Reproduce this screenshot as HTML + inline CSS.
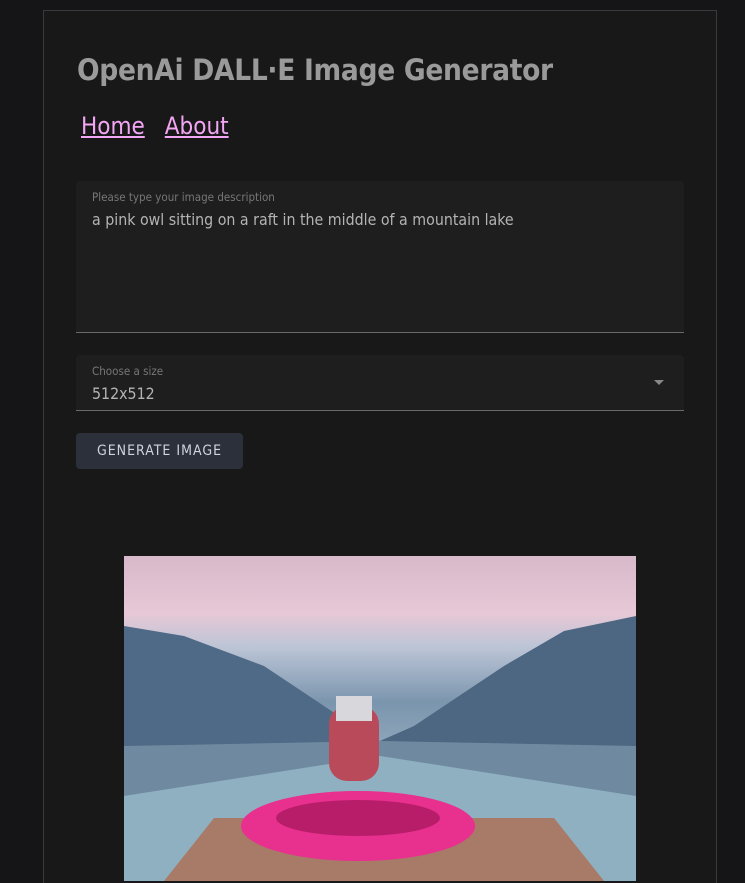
<!DOCTYPE html>
<html><head><style>
html,body{margin:0;width:745px;height:883px;overflow:hidden;background:#151517;font-family:"DejaVu Sans","Liberation Sans",sans-serif;}
.box{position:absolute;left:43px;top:10px;width:672px;height:872px;border:1px solid #3a3a3a;border-bottom:none;background:#181818;}
h1{position:absolute;left:33px;top:42px;margin:0;font-size:29.5px;font-weight:bold;color:#9a9a9a;letter-spacing:-0.3px;font-family:"DejaVu Sans Condensed","DejaVu Sans",sans-serif;}
.nav{position:absolute;left:37px;top:101px;font-size:24px;font-family:"DejaVu Sans Condensed","DejaVu Sans",sans-serif;}
.nav a{color:#f3a6f3;text-decoration:underline;margin-right:20px;}
.ta{position:absolute;left:32px;top:170px;width:608px;height:151px;background:#1e1e1e;border-bottom:1px solid #6a6a6a;border-radius:4px 4px 0 0;}
.lab{position:absolute;left:16px;font-size:11.5px;color:#777;font-family:"DejaVu Sans Condensed",sans-serif;}
.val{position:absolute;left:16px;font-size:15.8px;color:#b4b4b4;font-family:"DejaVu Sans Condensed",sans-serif;}
.sel{position:absolute;left:32px;top:344px;width:608px;height:55px;background:#1e1e1e;border-bottom:1px solid #6a6a6a;border-radius:4px 4px 0 0;}
.arrow{position:absolute;right:20px;top:25px;border-left:5px solid transparent;border-right:5px solid transparent;border-top:5px solid #888;}
.btn{position:absolute;left:32px;top:422px;width:167px;height:36px;background:#2b303b;border-radius:4px;color:#d0d4dc;font-size:14px;letter-spacing:1px;text-align:center;line-height:36px;font-family:"DejaVu Sans Condensed",sans-serif;}
.img{position:absolute;left:80px;top:545px;width:512px;height:325px;overflow:hidden;background:linear-gradient(#d8b9cb 0%,#e6c8d6 18%,#bcc5d6 28%,#7b95ae 45%,#8fa8bb 60%,#a9c3d0 80%)}
</style></head><body>
<div class="box">
<h1>OpenAi DALL·E Image Generator</h1>
<div class="nav"><a>Home</a><a>About</a></div>
<div class="ta"><div class="lab" style="top:9px">Please type your image description</div><div class="val" style="top:29px">a pink owl sitting on a raft in the middle of a mountain lake</div></div>
<div class="sel"><div class="lab" style="top:9px">Choose a size</div><div class="val" style="top:29px">512x512</div><div class="arrow"></div></div>
<div class="btn">GENERATE IMAGE</div>
<div class="img">
<svg width="512" height="325" viewBox="0 0 512 325">
<polygon points="0,70 60,80 140,110 230,170 256,185 0,260" fill="#4f6a86"/>
<polygon points="512,60 440,75 380,110 290,170 256,185 512,260" fill="#4d6682"/>
<polygon points="0,190 256,185 512,190 512,260 256,200 0,260" fill="#6f8aa0"/>
<polygon points="0,240 256,200 512,240 512,325 0,325" fill="#8fb0c0"/>
<polygon points="40,325 90,262 430,262 480,325" fill="#a87a68"/>
<ellipse cx="234" cy="270" rx="117" ry="35" fill="#e8308f"/>
<ellipse cx="234" cy="262" rx="82" ry="18" fill="#b81d6a"/>
<rect x="205" y="150" width="50" height="75" rx="18" fill="#b84a5a"/>
<rect x="212" y="140" width="36" height="25" fill="#d8d8dc"/>
</svg></div>
</div>
</body></html>
